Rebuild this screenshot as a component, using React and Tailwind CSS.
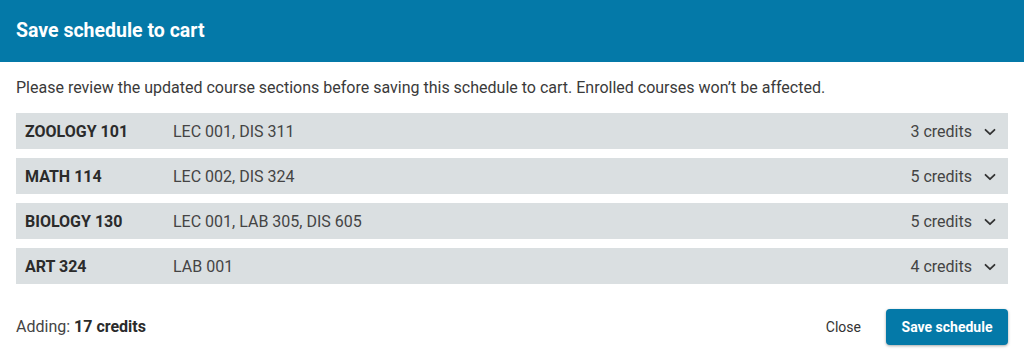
import React from "react";

const courses = [
  { name: "ZOOLOGY 101", sections: "LEC 001, DIS 311", credits: "3 credits" },
  { name: "MATH 114", sections: "LEC 002, DIS 324", credits: "5 credits" },
  { name: "BIOLOGY 130", sections: "LEC 001, LAB 305, DIS 605", credits: "5 credits" },
  { name: "ART 324", sections: "LAB 001", credits: "4 credits" },
];

function Chevron() {
  return (
    <svg width="14" height="14" viewBox="0 0 14 14" fill="none" className="text-[#333]">
      <path d="M2.5 4.8 L7 9.2 L11.5 4.8" stroke="currentColor" strokeWidth="1.8" strokeLinecap="round" strokeLinejoin="round" />
    </svg>
  );
}

export default function App() {
  return (
    <div className="w-[1024px] h-[354px] bg-white font-['Roboto',sans-serif] text-[#333]">
      <div className="h-[62px] bg-[#0479a8] flex items-center px-4">
        <h1 className="text-white text-[19.5px] font-bold">Save schedule to cart</h1>
      </div>
      <div className="px-4">
        <p className="text-[16px] text-[#3a3a3a] h-[51px] flex items-center pt-[1px]">
          Please review the updated course sections before saving this schedule to cart. Enrolled courses won’t be affected.
        </p>
        <div className="flex flex-col gap-[9px]">
          {courses.map((c) => (
            <div key={c.name} className="h-9 bg-[#dadfe1] flex items-center pl-[9px] pr-[11px] pt-[1px] text-[16px]">
              <span className="w-[148px] font-bold text-[#2b2b2b]">{c.name}</span>
              <span className="flex-1 text-[#444]">{c.sections}</span>
              <span className="text-[#444] mr-[11px]">{c.credits}</span>
              <Chevron />
            </div>
          ))}
        </div>
        <div className="flex items-center justify-between mt-[25px] h-9">
          <div className="text-[16px] text-[#444]">
            Adding: <span className="font-bold text-[#2b2b2b]">17 credits</span>
          </div>
          <div className="flex items-center">
            <button className="text-[14px] text-[#333] px-[10px] h-9 mr-[15px]">Close</button>
            <button className="h-9 w-[122px] rounded-[4px] bg-[#0479a8] text-white text-[14px] font-bold shadow-[0_1px_3px_rgba(0,0,0,0.35)]">
              Save schedule
            </button>
          </div>
        </div>
      </div>
    </div>
  );
}
